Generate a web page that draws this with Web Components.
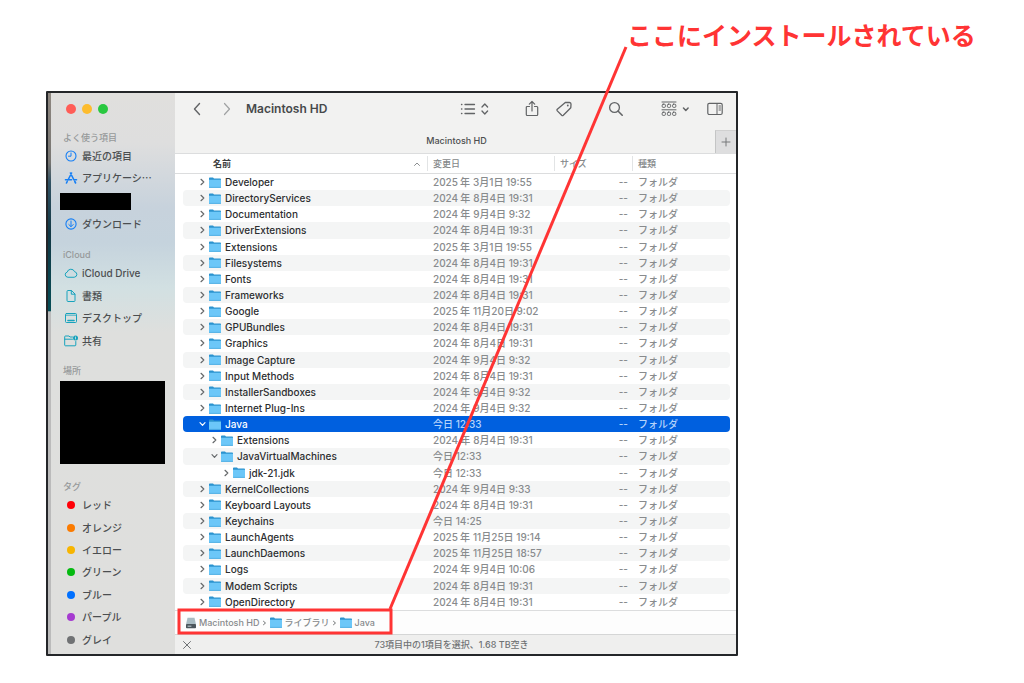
<!DOCTYPE html>
<html lang="ja">
<head>
<meta charset="utf-8">
<title>Macintosh HD</title>
<style>
body { margin: 0; background: #fff; font-family: Inter, "Noto Sans CJK JP", sans-serif; font-size: 11px; }
</style>
</head>
<body>
<install-guide>
  <span slot="caption">ここにインストールされている</span>
  <finder-window>
    <finder-sidebar slot="sidebar">
      <sidebar-group label="よく使う項目">
        <sidebar-item icon="clock">最近の項目</sidebar-item>
        <sidebar-item icon="apps">アプリケーシ…</sidebar-item>
        <sidebar-item redacted></sidebar-item>
        <sidebar-item icon="download">ダウンロード</sidebar-item>
      </sidebar-group>
      <sidebar-group label="iCloud" class="cloud">
        <sidebar-item icon="cloud" class="latin">iCloud Drive</sidebar-item>
        <sidebar-item icon="doc">書類</sidebar-item>
        <sidebar-item icon="desktop">デスクトップ</sidebar-item>
        <sidebar-item icon="shared">共有</sidebar-item>
      </sidebar-group>
      <sidebar-group label="場所" redacted></sidebar-group>
      <sidebar-group label="タグ" class="tags">
        <sidebar-item dot="#ff0008">レッド</sidebar-item>
        <sidebar-item dot="#fb7b00">オレンジ</sidebar-item>
        <sidebar-item dot="#f7b500">イエロー</sidebar-item>
        <sidebar-item dot="#05ba10">グリーン</sidebar-item>
        <sidebar-item dot="#0070ff">ブルー</sidebar-item>
        <sidebar-item dot="#a63bd0">パープル</sidebar-item>
        <sidebar-item dot="#707274">グレイ</sidebar-item>
      </sidebar-group>
    </finder-sidebar>
    <finder-toolbar>Macintosh HD</finder-toolbar>
    <finder-tabs>Macintosh HD</finder-tabs>
    <file-list></file-list>
    <path-bar></path-bar>
    <status-bar>73項目中の1項目を選択、1.68 TB空き</status-bar>
  </finder-window>
</install-guide>

<script>
const svg = (w, h, body, extra = '', stroke = 'currentColor') =>
  `<svg width="${w}" height="${h}" viewBox="0 0 ${w} ${h}" fill="none" stroke="${stroke}" stroke-linecap="round" stroke-linejoin="round" aria-hidden="true" ${extra}>${body}</svg>`;

const folder = svg(12, 11,
  '<path d="M0 1.200Q0 .4.8.4H4l1 1h6.200q.8 0 .8.8V5H0Z" fill="#2b93cf"/><path d="M0 2.800h12v7.500q0 .5-.5.5H.5Q0 10.800 0 10.300Z" fill="#6cc7f8"/><path d="M.5 10.400h11" stroke="#48a9e0" stroke-width=".8"/>', '', 'none');

const icons = {
  clock: svg(14, 14, '<circle cx="7" cy="7" r="5" stroke-width="1.100"/><path d="M7 4v3.200H4.500"/>'),
  apps: svg(14, 14, '<path d="M7.600 2 4 9M6.400 2 10 9M1.500 8.700h6M10 8.700h2.500M3.200 10.500 2.500 12M10.800 10.500l.8 1.500" stroke-width="1.600"/>'),
  download: svg(14, 14, '<circle cx="7" cy="7" r="5.100" stroke-width="1.100"/><path d="M7 4v5.500M4.800 7.500 7 9.700l2.200-2.200"/>'),
  cloud: svg(14, 14, '<path d="M3.500 11.200a2.600 2.600 0 0 1-.3-5.100A3.900 3.900 0 0 1 10.600 5.700a2.800 2.800 0 0 1 0 5.500Z"/>'),
  doc: svg(14, 14, '<path d="M3 2.300q0-.8.8-.8H7.500l3.500 3.500v6.700q0 .8-.8.8H3.800q-.8 0-.8-.8ZM7.300 1.700V5.200H10.800"/>'),
  desktop: svg(14, 14, '<rect x="1.500" y="2.500" width="11" height="9" rx="1"/><path d="M2 4.200h10" stroke-width=".8"/><path d="M4 9.500h6" stroke-width="1.600"/>'),
  shared: svg(14, 14, '<path d="M8.500 3H6L5 2H1.500q-.8 0-.8.8V11q0 .8.8.8H11q.8 0 .8-.8V7.500M.8 5.200H8.500"/><circle cx="11.500" cy="4" r="2.500" fill="currentColor" stroke="none"/><path d="M11.500 3v2" stroke="#d8e4e5" stroke-width=".8"/>'),
  back: svg(10, 14, '<path d="M7.500 1.500 2.500 7l5 5.500" stroke-width="1.400"/>'),
  forward: svg(10, 14, '<path d="M2.500 1.500l5 5.500-5 5.500" stroke-width="1.200"/>'),
  list: svg(30, 14, '<path d="M5 2.500h9.500M5 7h9.500M5 11.500h9.500M1.500 2.500h.4M1.500 7h.4M1.500 11.500h.4M22 5 24.800 2l2.800 3M22 9l2.800 3 2.800-3" stroke-width="1.300"/>'),
  share: svg(14, 18, '<path d="M4.500 6.500H2.200q-.9 0-.9.900v7.200q0 .9.9.9h9.600q.9 0 .9-.9V7.400q0-.9-.9-.9H9.500M7 11V1.500M4.300 4.100 7 1.500l2.700 2.600" stroke-width="1.200"/>'),
  tag: svg(16, 16, '<path d="M9.300 1.400 13.500 1.500Q15 1.600 15 3.100L14.800 6.700 7.300 14.300q-.8.700-1.600 0L1.300 9.900q-.7-.8 0-1.600Z" stroke-width="1.300"/><circle cx="11.800" cy="4.500" r=".9" fill="currentColor" stroke="none"/>'),
  search: svg(16, 16, '<circle cx="6.500" cy="6.500" r="4.900" stroke-width="1.300"/><path d="m10.200 10.200 4 4" stroke-width="1.600"/>'),
  group: svg(28, 16, [1.200, 6.400, 11.600].map(x => `<rect x="${x}" y="3.200" width="3.200" height="3.200" rx="1"/><rect x="${x}" y="11.200" width="3.200" height="3.200" rx="1"/>`).join('') + '<path d="M1 1h14M1 8.800h14" stroke-width="1"/><path d="m22.500 7 2.300 2.400L27.100 7" stroke-width="1.500"/>'),
  preview: svg(16, 14, '<rect x=".8" y="1.300" width="14.400" height="11.200" rx="1.500" stroke-width="1.200"/><path d="M10 1.500v11M12 4h1.500M12 6h1.500M12 8h1.500"/>'),
  disk: svg(12, 12, '<path d="M2.500.7h7L11 7.500H1Z" fill="#a9bcc3"/><rect x="1" y="7" width="10" height="4.200" rx=".8" fill="#4b565c"/><path d="M3 9.200h3" stroke="#c4d2d8"/>', '', 'none'),
};

const define = (name, template, setup) => customElements.define(name, class extends HTMLElement {
  constructor() {
    super();
    this.attachShadow({ mode: 'open' });
  }
  connectedCallback() {
    this.shadowRoot.innerHTML = template;
    if (setup) setup(this, this.shadowRoot);
  }
});

define('install-guide', `
<style>
:host { display: block; position: relative; padding: 16px 286px 27px 46px; }
.caption { margin: 0 -286px 39px 0; padding-left: 581px; font: 700 25px/36px "Noto Sans CJK JP", sans-serif; color: #ff3434; white-space: nowrap; }
svg { position: absolute; left: 0; top: 0; pointer-events: none; }
</style>
<div class="caption"><slot name="caption"></slot></div>
<slot></slot>
<svg width="640" height="640" fill="none" stroke="#ff3434" stroke-width="3" aria-hidden="true"><path d="M626 47 390 609"/><rect x="179" y="610" width="212" height="23"/></svg>`);

define('finder-window', `
<style>
:host { display: grid; grid-template-columns: 127px minmax(0, 1fr); border: 2px solid #242629; border-radius: 1px; background: #fff; }
main { display: flex; flex-direction: column; min-width: 0; }
</style>
<slot name="sidebar"></slot>
<main><slot></slot></main>`);

define('finder-sidebar', `
<style>
:host { display: block; border-left: 3px solid; border-image: linear-gradient(#8e8780, #777572 70px, #315264 90px, #123744 140px, #064d56 218px, #bbb 219px) 1; background: linear-gradient(#e0dfdd, #dedede 50px, #c7d2dc 115px, #c5d3dd 150px, #d2e0e2 195px, #dedfdd 240px, #dfdfdd); }
.lights { display: flex; gap: 6px; padding: 11px 0 0 15px; height: 27px; }
.lights button { width: 10px; height: 10px; padding: 0; border: 0; border-radius: 50%; }
.close { background: #ff5d57; } .min { background: #fdbc2e; } .zoom { background: #29c840; }
</style>
<div class="lights"><button class="close" aria-label="閉じる"></button><button class="min" aria-label="しまう"></button><button class="zoom" aria-label="拡大"></button></div>
<nav><slot></slot></nav>`);

define('sidebar-group', `
<style>
:host { display: block; margin-bottom: 13px; color: #167ff5; --block: 90px; }
:host(.cloud) { color: #17a3bd; margin-bottom: 12px; }
:host(.tags) { margin: 0; --block: 157px; }
:host([redacted]) { margin-bottom: 16px; }
h2 { margin: 0; padding-left: 12px; font-size: 9px; line-height: 14px; font-weight: 500; color: #96999a; }
.items { display: flex; flex-direction: column; min-height: var(--block); }
.cover { margin: 3px 10px 0 9px; height: 83px; background: #000; }
</style>
<h2></h2>`, (el, root) => {
  root.querySelector('h2').textContent = el.getAttribute('label');
  root.querySelector('h2').insertAdjacentHTML('afterend',
    el.hasAttribute('redacted') ? '<div class="cover"></div>' : '<div class="items"><slot></slot></div>');
});

define('sidebar-item', `
<style>
:host { display: flex; flex: 1; align-items: center; font-family: "Noto Sans CJK JP", sans-serif; }
:host(.latin) { font-family: Inter, sans-serif; }
a { display: flex; align-items: center; gap: 4px; padding-left: 13px; color: inherit; text-decoration: none; white-space: nowrap; }
.text { color: #4b4e50; font-size: 10px; line-height: 16px; font-weight: 500; }
.dot { width: 8px; height: 8px; margin: 0 3px; border-radius: 50%; }
.cover { width: 71px; height: 17px; margin-left: 9px; background: #000; }
</style>`, (el, root) => {
  if (el.hasAttribute('redacted')) {
    root.innerHTML += '<div class="cover"></div>';
    return;
  }
  const dot = el.getAttribute('dot');
  root.innerHTML += `<a href="#">${dot ? `<span class="dot" style="background:${dot}"></span>` : icons[el.getAttribute('icon')]}<span class="text"><slot></slot></span></a>`;
});

define('finder-toolbar', `
<style>
:host { display: flex; align-items: center; height: 31px; padding: 0 13px 0 17px; background: #f2f2f1; color: #626466; }
button { display: flex; padding: 0; border: 0; background: none; color: inherit; }
.fwd { margin-left: 20px; color: #a0a2a3; }
h1 { margin: 0 auto 0 14px; font-size: 12px; line-height: 16px; font-weight: 600; color: #47494b; white-space: nowrap; }
.share { margin: 0 17px 0 35px; }
.search { margin: 0 37px 0 36px; }
.preview { margin-left: 18px; }
</style>
<button aria-label="戻る">${icons.back}</button><button class="fwd" aria-label="進む">${icons.forward}</button>
<h1><slot></slot></h1>
<button aria-label="表示">${icons.list}</button><button class="share" aria-label="共有">${icons.share}</button><button aria-label="タグ">${icons.tag}</button><button class="search" aria-label="検索">${icons.search}</button><button aria-label="グループ">${icons.group}</button><button class="preview" aria-label="プレビュー">${icons.preview}</button>`);

define('finder-tabs', `
<style>
:host { display: grid; grid-template-columns: 1fr 21px; height: 23px; background: #f2f2f1; text-align: center; }
span { padding-left: 23px; font-size: 9px; line-height: 22px; font-weight: 500; color: #4c4e4f; }
button { display: grid; place-items: center; padding: 0; border: 0; border-left: 1px solid #c4c5c5; border-top: 1px solid #d0d0d0; background: #dededf; color: #77797a; }
:host { padding-top: 6px; }
</style>
<span><slot></slot></span><button aria-label="新規タブ">${svg(10, 10, '<path d="M5 1v8M1 5h8"/>')}</button>`);

// name, date, depth, state
const files = [
  ['Developer', '2025年3月1日 19:55'], ['DirectoryServices', '2024年8月4日 19:31'],
  ['Documentation', '2024年9月4日 9:32'], ['DriverExtensions', '2024年8月4日 19:31'],
  ['Extensions', '2025年3月1日 19:55'], ['Filesystems', '2024年8月4日 19:31'],
  ['Fonts', '2024年8月4日 19:31'], ['Frameworks', '2024年8月4日 19:31'],
  ['Google', '2025年11月20日 9:02'], ['GPUBundles', '2024年8月4日 19:31'],
  ['Graphics', '2024年8月4日 19:31'], ['Image Capture', '2024年9月4日 9:32'],
  ['Input Methods', '2024年8月4日 19:31'], ['InstallerSandboxes', '2024年9月4日 9:32'],
  ['Internet Plug-Ins', '2024年9月4日 9:32'], ['Java', '今日 12:33', 0, 'open selected'],
  ['Extensions', '2024年8月4日 19:31', 1], ['JavaVirtualMachines', '今日 12:33', 1, 'open'],
  ['jdk-21.jdk', '今日 12:33', 2], ['KernelCollections', '2024年9月4日 9:33'],
  ['Keyboard Layouts', '2024年8月4日 19:31'], ['Keychains', '今日 14:25'],
  ['LaunchAgents', '2025年11月25日 19:14'], ['LaunchDaemons', '2025年11月25日 18:57'],
  ['Logs', '2024年9月4日 10:06'], ['Modem Scripts', '2024年8月4日 19:31'],
  ['OpenDirectory', '2024年8月4日 19:31'],
];

define('file-list', `
<style>
:host { display: block; padding: 0 6px 0 8px; background: linear-gradient(#dcddde, #dcddde) 0 0 / 100% 1px no-repeat, linear-gradient(#dcddde, #dcddde) 0 20px / 100% 1px no-repeat #fff; }
table { width: 100%; height: 457px; table-layout: fixed; border-collapse: separate; border-spacing: 0; }
th, td { padding: 0; text-align: left; white-space: nowrap; }
th { height: 21px; font-size: 9px; line-height: 15px; font-weight: 500; color: #85888a; }
th > span { display: block; padding-left: 5px; border-left: 1px solid #e2e4e5; }
th:first-child > span { display: flex; justify-content: space-between; align-items: center; padding: 0 6px 0 30px; border: 0; color: #3d3f41; font-weight: 600; }
td { height: 16px; font-size: 10px; line-height: 16px; font-weight: 500; color: #888b8d; padding-left: 6px; }
.c1 { width: 244px; } .c2 { width: 127px; } .c3 { width: 78px; }
td:first-child { padding-left: 16px; border-radius: 4px 0 0 4px; }
td:last-child { border-radius: 0 4px 4px 0; }
td:nth-child(3) { text-align: right; padding-right: 4px; }
tbody tr:nth-child(even) td { background: #f4f5f5; }
tbody tr.selected td { background: #0060df; color: #b5d3fa; }
.year { margin: 0 3px 0 2px; }
.name { display: flex; align-items: center; color: #2c2e30; padding-left: calc(var(--depth) * 12px); }
.selected .name { color: #fff; }
.name button { display: flex; width: 7px; margin-right: 3px; padding: 0; border: 0; background: none; color: #66696b; }
.selected .name button { color: #fff; }
.name .text { margin-left: 4px; }
</style>
<table>
<thead><tr><th class="c1"><span>名前${svg(8, 6, '<path d="M1.500 4.500 4 2l2.500 2.500"/>', 'style="color:#8b8e90"')}</span></th><th class="c2"><span>変更日</span></th><th class="c3"><span>サイズ</span></th><th><span>種類</span></th></tr></thead>
<tbody></tbody>
</table>`, (el, root) => {
  root.querySelector('tbody').innerHTML = files.map(([name, date, depth = 0, state = '']) => `
<tr class="${state}"><td><div class="name" style="--depth:${depth}"><button aria-label="${name}">${svg(7, 8, state ? '<path d="M1 2.700 3.500 5.300 6 2.700" stroke-width="1.200"/>' : '<path d="M2 1.300 4.800 4 2 6.700" stroke-width="1.200"/>')}</button>${folder}<span class="text">${name}</span></div></td><td>${date.replace('年', '<span class="year">年</span>')}</td><td>--</td><td>フォルダ</td></tr>`).join('');
});

define('path-bar', `
<style>
:host { display: block; border-top: 1px solid #dcddde; background: #fdfdfd; }
ol { display: flex; align-items: center; gap: 3px; height: 23px; margin: 0; padding: 0 0 0 10px; list-style: none; }
li { display: flex; align-items: center; gap: 3px; color: #6f7274; }
a { display: flex; align-items: center; gap: 2px; font-size: 9px; line-height: 14px; font-weight: 500; color: #888b8d; text-decoration: none; white-space: nowrap; }
</style>
<ol><li><a href="#">${icons.disk}Macintosh HD</a>${svg(5, 6, '<path d="M1.500 1.300 3.500 3 1.500 4.700"/>')}</li><li><a href="#">${folder}ライブラリ</a>${svg(5, 6, '<path d="M1.500 1.300 3.500 3 1.500 4.700"/>')}</li><li><a href="#">${folder}Java</a></li></ol>`);

define('status-bar', `
<style>
:host { display: grid; grid-template-columns: 12px 1fr 20px; align-items: center; height: 19px; padding: 0 6px; border-top: 1px solid #d5d6d6; background: #efefee; color: #6f7274; }
button { display: flex; padding: 0 0 0 1px; border: 0; background: none; color: inherit; }
span { font-size: 9px; line-height: 16px; font-weight: 500; text-align: center; }
</style>
<button aria-label="中止">${svg(10, 10, '<path d="m1.500 1.500 7 7M8.500 1.500l-7 7"/>')}</button><span><slot></slot></span>`);
</script>
</body>
</html>
